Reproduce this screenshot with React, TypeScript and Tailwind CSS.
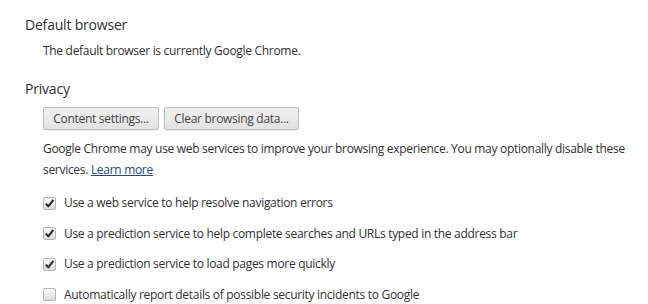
import type { ReactNode } from "react";

const options = [
  { label: "Use a web service to help resolve navigation errors", checked: true },
  {
    label: "Use a prediction service to help complete searches and URLs typed in the address bar",
    checked: true,
  },
  { label: "Use a prediction service to load pages more quickly", checked: true },
  { label: "Automatically report details of possible security incidents to Google", checked: false },
];

function Checkbox({ checked }: { checked: boolean }) {
  return (
    <span className="w-[13px] h-[13px] shrink-0 rounded-[2px] border border-[#b4b4b4] bg-gradient-to-b from-[#fafafa] to-[#dcdcdc] flex items-center justify-center">
      {checked && (
        <svg width="11" height="11" viewBox="0 0 11 11">
          <path d="M1.8 5.6 L4.3 8.3 L9.4 1.9" fill="none" stroke="#2c2c2c" strokeWidth="2.1" strokeLinejoin="round" />
        </svg>
      )}
    </span>
  );
}

function Button({ children, width }: { children: ReactNode; width: string }) {
  return (
    <button
      className={`${width} h-[23px] rounded-[2px] border border-[#bcbcbc] bg-gradient-to-b from-[#f1f1f1] to-[#e2e2e2] text-[12px] tracking-[-0.3px] text-[#444] shadow-[0_1px_0_rgba(0,0,0,0.06)]`}
    >
      {children}
    </button>
  );
}

export default function App() {
  return (
    <div className="w-[648px] h-[304px] overflow-hidden bg-white text-[#303030] font-['Open_Sans',sans-serif] pl-[25px] pt-[15px]">
      <h3 className="text-[14px] leading-[20px] tracking-[-0.2px]">Default browser</h3>
      <p className="ml-[18px] mt-[7px] text-[12px] leading-[18px] tracking-[-0.3px]">
        The default browser is currently Google Chrome.
      </p>

      <h3 className="mt-[19px] text-[14px] leading-[20px] tracking-[-0.2px]">Privacy</h3>
      <div className="ml-[18px] mt-[8px] flex gap-[5px]">
        <Button width="w-[116px]">Content settings...</Button>
        <Button width="w-[135px]">Clear browsing data...</Button>
      </div>

      <p className="ml-[18px] mt-[8px] text-[12px] leading-[21px] tracking-[-0.3px] whitespace-nowrap">
        Google Chrome may use web services to improve your browsing experience. You may optionally disable these
        <br />
        services.{" "}
        <a href="#" className="text-[#24487a] underline">
          Learn more
        </a>
      </p>

      <div className="ml-[18px] mt-[8px]">
        {options.map((o) => (
          <label key={o.label} className="h-[30.5px] flex items-center gap-[8px] text-[12px] tracking-[-0.3px]">
            <Checkbox checked={o.checked} />
            <span className="whitespace-nowrap">{o.label}</span>
          </label>
        ))}
      </div>
    </div>
  );
}
